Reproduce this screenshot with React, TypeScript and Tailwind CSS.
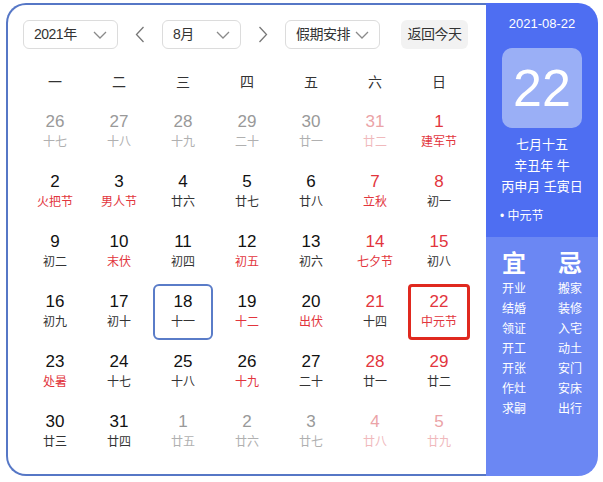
type Tone = "prev" | "prevRed" | "normal" | "red";

type Day = {
  n: number;
  lunar: string;
  tone: Tone;
  fest?: boolean;
  box?: "today" | "selected";
};

const weeks: Day[][] = [
  [
    { n: 26, lunar: "十七", tone: "prev" },
    { n: 27, lunar: "十八", tone: "prev" },
    { n: 28, lunar: "十九", tone: "prev" },
    { n: 29, lunar: "二十", tone: "prev" },
    { n: 30, lunar: "廿一", tone: "prev" },
    { n: 31, lunar: "廿二", tone: "prevRed" },
    { n: 1, lunar: "建军节", tone: "red", fest: true },
  ],
  [
    { n: 2, lunar: "火把节", tone: "normal", fest: true },
    { n: 3, lunar: "男人节", tone: "normal", fest: true },
    { n: 4, lunar: "廿六", tone: "normal" },
    { n: 5, lunar: "廿七", tone: "normal" },
    { n: 6, lunar: "廿八", tone: "normal" },
    { n: 7, lunar: "立秋", tone: "red", fest: true },
    { n: 8, lunar: "初一", tone: "red" },
  ],
  [
    { n: 9, lunar: "初二", tone: "normal" },
    { n: 10, lunar: "末伏", tone: "normal", fest: true },
    { n: 11, lunar: "初四", tone: "normal" },
    { n: 12, lunar: "初五", tone: "normal", fest: true },
    { n: 13, lunar: "初六", tone: "normal" },
    { n: 14, lunar: "七夕节", tone: "red", fest: true },
    { n: 15, lunar: "初八", tone: "red" },
  ],
  [
    { n: 16, lunar: "初九", tone: "normal" },
    { n: 17, lunar: "初十", tone: "normal" },
    { n: 18, lunar: "十一", tone: "normal", box: "today" },
    { n: 19, lunar: "十二", tone: "normal", fest: true },
    { n: 20, lunar: "出伏", tone: "normal", fest: true },
    { n: 21, lunar: "十四", tone: "red" },
    { n: 22, lunar: "中元节", tone: "red", fest: true, box: "selected" },
  ],
  [
    { n: 23, lunar: "处暑", tone: "normal", fest: true },
    { n: 24, lunar: "十七", tone: "normal" },
    { n: 25, lunar: "十八", tone: "normal" },
    { n: 26, lunar: "十九", tone: "normal", fest: true },
    { n: 27, lunar: "二十", tone: "normal" },
    { n: 28, lunar: "廿一", tone: "red" },
    { n: 29, lunar: "廿二", tone: "red" },
  ],
  [
    { n: 30, lunar: "廿三", tone: "normal" },
    { n: 31, lunar: "廿四", tone: "normal" },
    { n: 1, lunar: "廿五", tone: "prev" },
    { n: 2, lunar: "廿六", tone: "prev" },
    { n: 3, lunar: "廿七", tone: "prev" },
    { n: 4, lunar: "廿八", tone: "prevRed" },
    { n: 5, lunar: "廿九", tone: "prevRed" },
  ],
];

const weekdays = ["一", "二", "三", "四", "五", "六", "日"];

const yi = ["开业", "结婚", "领证", "开工", "开张", "作灶", "求嗣"];
const ji = ["搬家", "装修", "入宅", "动土", "安门", "安床", "出行"];

function numColor(t: Tone) {
  if (t === "prev") return "text-[#999999]";
  if (t === "prevRed") return "text-[#eba3a7]";
  if (t === "red") return "text-[#e2353d]";
  return "text-[#111111]";
}

function lunarColor(d: Day) {
  if (d.tone === "prev") return "text-[#b0b0b0]";
  if (d.tone === "prevRed") return "text-[#f0b9bc]";
  if (d.fest) return "text-[#e2353d]";
  return "text-[#333333]";
}

function Caret() {
  return (
    <svg width="14" height="8" viewBox="0 0 14 8" fill="none" className="shrink-0 text-[#8a8a8a]">
      <path d="M1 1 L7 7 L13 1" stroke="currentColor" strokeWidth="1.3" />
    </svg>
  );
}

function Arrow({ dir }: { dir: "left" | "right" }) {
  return (
    <svg width="10" height="17" viewBox="0 0 10 17" fill="none" className="text-[#777]">
      <path
        d={dir === "left" ? "M8.5 1 L1.5 8.5 L8.5 16" : "M1.5 1 L8.5 8.5 L1.5 16"}
        stroke="currentColor"
        strokeWidth="1.3"
      />
    </svg>
  );
}

function Select({ label, width }: { label: string; width: string }) {
  return (
    <div
      className={`flex h-[29px] ${width} items-center justify-between rounded-[6px] border border-[#dcdcdc] pl-[10px] pr-[10px] text-[14px] text-[#333]`}
    >
      <span className="tracking-[-0.5px]">{label}</span>
      <Caret />
    </div>
  );
}

export default function App() {
  return (
    <div
      className="pl-[6px] pt-[3px]"
      style={{ fontFamily: '"Liberation Sans", "Noto Sans CJK SC", sans-serif' }}
    >
      <div className="flex h-[473px] w-[592px]">
        {/* Calendar */}
        <div className="w-[480px] rounded-l-[20px] border-2 border-r-0 border-[#5677c6] bg-white pl-[15px] pt-[15px]">
          <div className="flex items-center">
            <Select label="2021年" width="w-[95px]" />
            <div className="flex w-[44px] justify-center">
              <Arrow dir="left" />
            </div>
            <Select label="8月" width="w-[79px]" />
            <div className="flex w-[44px] justify-center">
              <Arrow dir="right" />
            </div>
            <Select label="假期安排" width="w-[95px]" />
            <div className="ml-[21px] flex h-[29px] w-[67px] items-center justify-center rounded-[6px] bg-[#f2f2f2] text-[14px] tracking-[-0.5px] text-[#333]">
              返回今天
            </div>
          </div>

          <div className="mt-[13px] grid h-[40px] w-[448px] grid-cols-7 items-center text-center text-[14px] text-[#333]">
            {weekdays.map((w) => (
              <div key={w}>{w}</div>
            ))}
          </div>

          <div className="w-[448px]">
            {weeks.map((week, i) => (
              <div key={i} className="grid h-[60px] grid-cols-7">
                {week.map((d, j) => (
                  <div key={j} className="flex items-center justify-center">
                    <div
                      className={`flex h-[56px] w-[60px] flex-col items-center justify-center ${
                        d.box === "today"
                          ? "rounded-[6px] border-2 border-[#5a7cc8]"
                          : d.box === "selected"
                            ? "w-[62px] rounded-[4px] border-[3px] border-[#e0291f]"
                            : ""
                      }`}
                    >
                      <span className={`text-[17px] leading-[20px] ${numColor(d.tone)}`}>{d.n}</span>
                      <span className={`text-[12px] leading-[20px] ${lunarColor(d)}`}>{d.lunar}</span>
                    </div>
                  </div>
                ))}
              </div>
            ))}
          </div>
        </div>

        {/* Side panel */}
        <div className="flex w-[112px] flex-col overflow-hidden rounded-r-[20px] text-white">
          <div className="flex h-[234px] flex-col items-center bg-[#4e6ef2] pt-[12px]">
            <div className="text-[13px] leading-[18px]">2021-08-22</div>
            <div className="mt-[15px] flex h-[80px] w-[80px] items-center justify-center rounded-[10px] bg-[#9aaff6] text-[52px] leading-none">
              22
            </div>
            <div className="mt-[6px] text-center text-[13px] leading-[21px]">
              <div>七月十五</div>
              <div>辛丑年 牛</div>
              <div>丙申月 壬寅日</div>
            </div>
            <div className="mt-[10px] self-start pl-[14px] text-[12px] leading-[18px]">• 中元节</div>
          </div>
          <div className="flex flex-1 bg-[#6b87f3] pt-[14px]">
            <div className="flex w-[56px] flex-col items-center">
              <div className="text-[24px] font-bold leading-[26px]">宜</div>
              <div className="mt-[2px] text-center text-[12px] leading-[20px]">
                {yi.map((t) => (
                  <div key={t}>{t}</div>
                ))}
              </div>
            </div>
            <div className="flex w-[56px] flex-col items-center">
              <div className="text-[24px] font-bold leading-[26px]">忌</div>
              <div className="mt-[2px] text-center text-[12px] leading-[20px]">
                {ji.map((t) => (
                  <div key={t}>{t}</div>
                ))}
              </div>
            </div>
          </div>
        </div>
      </div>
    </div>
  );
}
